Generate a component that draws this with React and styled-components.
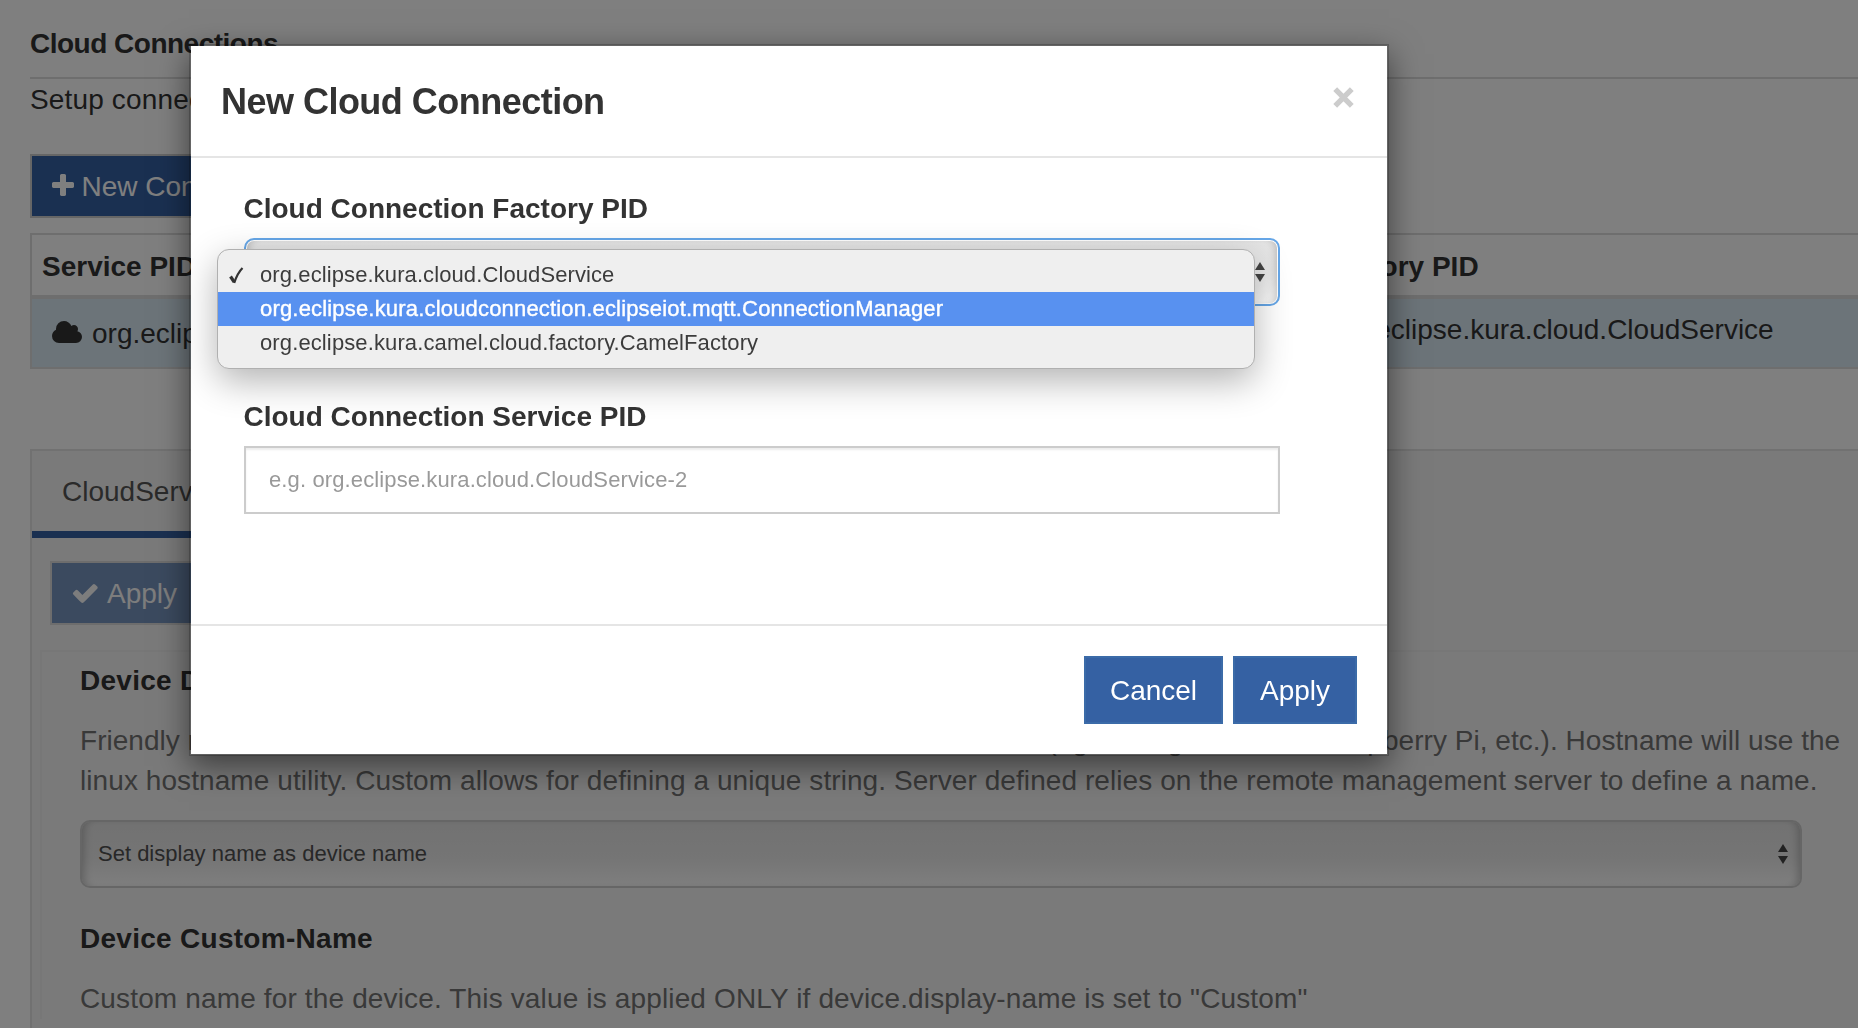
import React from "react";
import styled, { createGlobalStyle, css } from "styled-components";

const Global = createGlobalStyle`
  * { box-sizing: border-box; }
  html, body { margin: 0; height: 1028px; overflow: hidden; background: #fff; }
  body {
    font-family: "Liberation Sans", Arial, Helvetica, sans-serif;
    font-size: 28px;
    line-height: 40px;
    color: #333;
  }
`;

const Page = styled.div`
  display: flex;
  flex-direction: column;
  height: 1028px;
  padding-left: 30px;
  overflow: hidden;
`;

const PageTitle = styled.h1`
  margin: 0;
  padding: 24px 0 13px;
  border-bottom: 2px solid #ddd;
  font-size: 28px;
  line-height: 40px;
  font-weight: bold;
  letter-spacing: -0.5px;
`;

const Intro = styled.p`
  margin: 0;
  padding: 1px 0 34px;
  white-space: nowrap;
  letter-spacing: 0.15px;
`;

const Icon = styled.svg`
  display: block;
  flex: none;
  fill: currentColor;
  margin-bottom: ${(p) => p.$lift ?? 0}px;
`;

const ToolButton = styled.button`
  display: flex;
  align-items: center;
  align-self: flex-start;
  gap: ${(p) => p.$gap}px;
  height: 64px;
  padding: 2px 20px 0;
  border: 2px solid #ccc;
  background: #3561a3;
  color: #fff;
  font: inherit;
  white-space: nowrap;
  opacity: ${(p) => (p.disabled ? 0.65 : 1)};
`;

const Table = styled.div`
  margin-top: 15px;
  flex: none;
  border: 2px solid #ddd;
  border-right: 0;
`;

const TableRow = styled.div`
  display: grid;
  grid-template-columns: 650px 635px 1fr;
  align-items: start;
  white-space: nowrap;
  ${(p) =>
    p.$head
      ? css`
          height: 64px;
          padding-top: 12px;
          border-bottom: 4px solid #ddd;
          font-weight: bold;
        `
      : css`
          height: 68px;
          padding-top: 11px;
          background: #d9e8f2;
        `}
`;

const Cell = styled.div`
  display: flex;
  align-items: center;
  gap: 10px;
  padding-left: ${(p) => p.$inset ?? 10}px;
  padding-top: ${(p) => p.$drop ?? 0}px;
`;

const Panel = styled.section`
  display: flex;
  flex-direction: column;
  flex: 1;
  min-height: 0;
  margin-top: 80px;
  border: 2px solid #e3e3e3;
  border-width: 2px 0 0 2px;
  background: #f5f5f5;
`;

const Tab = styled.div`
  align-self: flex-start;
  width: 290px;
  height: 87px;
  flex: none;
  padding: 21px 30px 0;
  border-bottom: 7px solid #3561a3;
  color: #555;
`;

const PanelBody = styled.div`
  display: flex;
  flex-direction: column;
  padding: 23px 0 0 18px;
`;

const Fields = styled.div`
  margin: 25px 0 0 -10px;
  padding: 9px 0 0 38px;
  border: 2px solid #eee;
  border-width: 2px 0 0 2px;
`;

const FieldTitle = styled.div`
  font-weight: bold;
  letter-spacing: 0.28px;
  padding-bottom: 20px;
  ${(p) => p.$spaced && css`padding-top: 31px;`}
`;

const Help = styled.p`
  margin: 0;
  color: #737373;
  white-space: nowrap;
`;

const Line = styled.span`
  display: block;
  letter-spacing: ${(p) => p.$track}px;
`;

const Select = styled.div`
  display: flex;
  align-items: center;
  justify-content: space-between;
  width: ${(p) => p.$w}px;
  height: 68px;
  padding: 0 ${(p) => (p.$focus ? 13 : 12)}px 0 16px;
  border: 2px solid ${(p) => (p.$focus ? "#66a7e8" : "#ccc")};
  border-radius: 10px;
  background: linear-gradient(#e4e4e4, #eaeaea 55%, #fdfdfd);
  box-shadow:
    inset 0 0 0 ${(p) => (p.$focus ? 1 : 0)}px #fff,
    inset 8px 0 8px -6px rgba(0, 0, 0, 0.22),
    inset -8px 0 8px -6px rgba(0, 0, 0, 0.22);
  color: #505050;
  font-size: 22px;
  margin-top: ${(p) => p.$top ?? 0}px;
  svg { display: block; }
`;

const Backdrop = styled.div`
  position: fixed;
  inset: 0;
  background: rgba(0, 0, 0, 0.5);
`;

const Modal = styled.div`
  position: absolute;
  top: 44px;
  left: 189px;
  width: 1200px;
  height: 712px;
  display: flex;
  flex-direction: column;
  border: 2px solid rgba(0, 0, 0, 0.2);
  background: #fff;
  background-clip: padding-box;
  box-shadow: 0 10px 30px rgba(0, 0, 0, 0.5);
`;

const ModalHeader = styled.header`
  display: flex;
  justify-content: space-between;
  height: 112px;
  padding: 31px 33px 0 30px;
  border-bottom: 2px solid #e5e5e5;
`;

const ModalTitle = styled.h2`
  margin: 0;
  font-size: 36px;
  line-height: 50px;
  font-weight: bold;
  letter-spacing: -0.52px;
`;

const CloseIcon = styled.svg`
  display: block;
  margin-top: 10px;
`;

const ModalBody = styled.div`
  display: flex;
  flex-direction: column;
  flex: 1;
  padding: 31px 53px 0;
`;

const Label = styled.label`
  display: block;
  margin-left: -0.5px;
  font-weight: bold;
  ${(p) => p.$second && css`padding-top: 91px;`}
`;

const Input = styled.input`
  display: block;
  width: 1036px;
  height: 68px;
  margin-top: 9px;
  padding: 0 23px;
  border: 2px solid #ccc;
  border-radius: 0;
  background: #fff;
  box-shadow: inset 0 2px 2px rgba(0, 0, 0, 0.075);
  font: inherit;
  font-size: 22px;
  letter-spacing: 0.12px;
  &::placeholder { color: #999; opacity: 1; }
`;

const ModalFooter = styled.footer`
  display: flex;
  justify-content: flex-end;
  gap: 10px;
  height: 130px;
  padding: 30px 30px 0;
  border-top: 2px solid #e5e5e5;
`;

const Action = styled.button`
  width: ${(p) => p.$w}px;
  height: 68px;
  padding: 1px 0 0;
  border: 2px solid #3b6ba8;
  background: #3561a3;
  color: #fff;
  font: inherit;
`;

const Menu = styled.div`
  position: absolute;
  top: 203px;
  left: 26px;
  width: 1038px;
  height: 120px;
  padding: 8px 0 0;
  border: 1px solid #b0b0b0;
  border-radius: 12px;
  background: #efefef;
  box-shadow: 0 12px 36px rgba(0, 0, 0, 0.3);
  font-size: 22px;
  line-height: 33px;
`;

const MenuItem = styled.div`
  display: grid;
  grid-template-columns: 42px 1fr;
  align-items: start;
  height: 34px;
  letter-spacing: ${(p) => p.$track}px;
  color: ${(p) => (p.$active ? "#fff" : "#3c3c3c")};
  background: ${(p) => (p.$active ? "#5891f0" : "transparent")};
  -webkit-text-stroke: ${(p) => (p.$active ? "0.4px #fff" : "0")};
  svg { display: block; margin: 9px 0 0 10.5px; }
`;

const PlusIcon = () => (
  <Icon width="22" height="22" viewBox="192 128 1408 1408" $lift={4}>
    <path d="M1600 736v192q0 40-28 68t-68 28h-416v416q0 40-28 68t-68 28h-192q-40 0-68-28t-28-68v-416h-416q-40 0-68-28t-28-68v-192q0-40 28-68t68-28h416v-416q0-40 28-68t68-28h192q40 0 68 28t28 68v416h416q40 0 68 28t28 68z" />
  </Icon>
);

const CheckIcon = () => (
  <Icon width="26" height="19" viewBox="85 334 1586 1188" $lift={1}>
    <path d="M1671 566q0 40-28 68l-724 724-136 136q-28 28-68 28t-68-28l-136-136-362-362q-28-28-28-68t28-68l136-136q28-28 68-28t68 28l294 295 656-657q28-28 68-28t68 28l136 136q28 28 28 68z" />
  </Icon>
);

const CloudIcon = () => (
  <Icon width="30" height="22" viewBox="64 128 1920 1408" $lift={4}>
    <path d="M1984 1152q0 159-112.5 271.5t-271.5 112.5h-1088q-185 0-316.5-131.5t-131.5-316.5q0-132 71-241.5t187-163.5q-2-28-2-43 0-212 150-362t362-150q158 0 286.5 88t187.5 230q70-62 166-62 106 0 181 75t75 181q0 75-41 138 129 30 213 134.5t84 239.5z" />
  </Icon>
);

const Arrows = () => (
  <svg width="10" height="20" viewBox="0 0 10 20" fill="#444">
    <path d="M5 0 10 8H0zM5 20 0 12h10z" />
  </svg>
);

export default function App() {
  return (
    <>
      <Global />
      <Page>
        <PageTitle>Cloud Connections</PageTitle>
        <Intro>Setup connections</Intro>
        <ToolButton $gap={7.5}>
          <PlusIcon />
          New Connection
        </ToolButton>
        <Table>
          <TableRow $head>
            <Cell>Service PID</Cell>
            <Cell>Status</Cell>
            <Cell $inset={6}>Factory PID</Cell>
          </TableRow>
          <TableRow>
            <Cell $inset={20} $drop={4}>
              <CloudIcon />
              org.eclipse.kura
            </Cell>
            <Cell />
            <Cell>org.eclipse.kura.cloud.CloudService</Cell>
          </TableRow>
        </Table>
        <Panel>
          <Tab>CloudService</Tab>
          <PanelBody>
            <ToolButton disabled $gap={9}>
              <CheckIcon />
              Apply
            </ToolButton>
            <Fields>
              <FieldTitle>Device Display-Name</FieldTitle>
              <Help>
                <Line $track={0.034}>
                  Friendly name of the device. Device name is the common name of the device (eg. Reliagate 10-20, Raspberry Pi, etc.). Hostname will use the
                </Line>
                <Line $track={0.076}>
                  linux hostname utility. Custom allows for defining a unique string. Server defined relies on the remote management server to define a name.
                </Line>
              </Help>
              <Select $w={1722} $top={19}>
                Set display name as device name
                <Arrows />
              </Select>
              <FieldTitle $spaced>Device Custom-Name</FieldTitle>
              <Help>
                <Line $track={0.146}>
                  Custom name for the device. This value is applied ONLY if device.display-name is set to "Custom"
                </Line>
              </Help>
            </Fields>
          </PanelBody>
        </Panel>
      </Page>
      <Backdrop />
      <Modal role="dialog">
        <ModalHeader>
          <ModalTitle>New Cloud Connection</ModalTitle>
          <CloseIcon width="21" height="21" viewBox="0 0 21 21">
            <path d="M2.2 2.2 18.8 18.8M18.8 2.2 2.2 18.8" stroke="#ccc" strokeWidth="5.4" />
          </CloseIcon>
        </ModalHeader>
        <ModalBody>
          <Label>Cloud Connection Factory PID</Label>
          <Select $w={1036} $focus $top={9}>
            <span />
            <Arrows />
          </Select>
          <Label $second>Cloud Connection Service PID</Label>
          <Input placeholder="e.g. org.eclipse.kura.cloud.CloudService-2" />
        </ModalBody>
        <ModalFooter>
          <Action $w={139}>Cancel</Action>
          <Action $w={124}>Apply</Action>
        </ModalFooter>
        <Menu>
          <MenuItem $track={0.1}>
            <svg width="15" height="18" viewBox="0 0 15 18" fill="none" stroke="#333">
              <path d="M1.5 9.5 5.2 15" strokeWidth="3.2" />
              <path d="M5.2 16C7 10.5 9.5 5 13.5 1" strokeWidth="2.2" />
            </svg>
            org.eclipse.kura.cloud.CloudService
          </MenuItem>
          <MenuItem $active $track={0.18}>
            <span />
            org.eclipse.kura.cloudconnection.eclipseiot.mqtt.ConnectionManager
          </MenuItem>
          <MenuItem $track={0.12}>
            <span />
            org.eclipse.kura.camel.cloud.factory.CamelFactory
          </MenuItem>
        </Menu>
      </Modal>
    </>
  );
}
